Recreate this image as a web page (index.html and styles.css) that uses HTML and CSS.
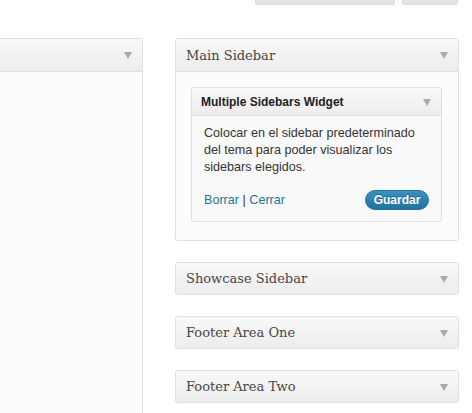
FILE: index.html
```html
<!DOCTYPE html>
<html>
<head>
<meta charset="utf-8">
<link rel="stylesheet" href="styles.css">
</head>
<body>
<div class="topbar">
  <div class="tbtn wide"></div>
  <div class="tbtn narrow"></div>
</div>
<div class="cols">
  <div class="leftcol">
    <div class="panel left">
      <div class="phead"><span class="tri"></span></div>
      <div class="pbody fill"></div>
    </div>
  </div>
  <div class="rightcol">
    <div class="panel">
      <div class="phead"><span class="ptitle">Main Sidebar</span><span class="tri"></span></div>
      <div class="pbody">
        <div class="widget">
          <div class="whead"><span class="wtitle">Multiple Sidebars Widget</span><span class="tri small"></span></div>
          <div class="wbody">
            <p class="wdesc">Colocar en el sidebar predeterminado del tema para poder visualizar los sidebars elegidos.</p>
            <div class="wactions">
              <div class="links"><a href="#">Borrar</a> | <a href="#">Cerrar</a></div>
              <button class="save">Guardar</button>
            </div>
          </div>
        </div>
      </div>
    </div>
    <div class="panel closed"><div class="phead"><span class="ptitle">Showcase Sidebar</span><span class="tri"></span></div></div>
    <div class="panel closed"><div class="phead"><span class="ptitle">Footer Area One</span><span class="tri"></span></div></div>
    <div class="panel closed"><div class="phead"><span class="ptitle">Footer Area Two</span><span class="tri"></span></div></div>
  </div>
</div>
</body>
</html>
```
FILE: styles.css
```css
html, body { margin: 0; padding: 0; background: #fff; overflow: hidden; }
body { width: 472px; height: 413px; font-family: "Liberation Sans", Arial, sans-serif; }
.topbar { display: flex; height: 38px; padding-left: 255px; gap: 7px; align-items: flex-start; }
.tbtn { height: 4px; background: #e4e4e4; border: 1px solid #dcdcdc; border-top: none; border-radius: 0 0 3px 3px; }
.tbtn.wide { width: 138px; }
.tbtn.narrow { width: 54px; }
.cols { display: flex; gap: 32px; align-items: flex-start; height: 375px; overflow: hidden; }
.leftcol { width: 143px; }
.rightcol { width: 284px; display: flex; flex-direction: column; gap: 21px; }
.panel { border: 1px solid #dfdfdf; border-radius: 3px; background: #fcfcfc; box-sizing: border-box; }
.panel.left { border-left: none; border-radius: 0 3px 0 0; border-bottom: none; }
.phead { height: 32px; display: flex; align-items: center; justify-content: space-between; padding: 0 10px; background: linear-gradient(#f9f9f9, #ececec); border-bottom: 1px solid #dfdfdf; }
.panel.closed .phead { height: 31px; border-bottom: none; border-radius: 3px; }
.panel.left .phead { justify-content: flex-end; padding-right: 10px; }
.ptitle { font-family: "DejaVu Serif", Georgia, serif; font-size: 13px; color: #464646; }
.tri { width: 0; height: 0; border-left: 4px solid transparent; border-right: 4px solid transparent; border-top: 7px solid #aaa; margin-top: 1px; }
.pbody { padding: 15px 16px 18px 15px; }
.pbody.fill { height: 400px; padding: 0; }
.widget { border: 1px solid #dfdfdf; border-radius: 3px; background: #f9f9f9; box-shadow: inset 0 1px 0 #fff; }
.whead { height: 27px; display: flex; align-items: center; justify-content: space-between; padding: 0 10px 0 9px; background: linear-gradient(#f9f9f9, #ececec); border-bottom: 1px solid #dfdfdf; }
.wtitle { font-weight: bold; font-size: 12px; color: #222; }
.wbody { padding: 9px 12px 11px 12px; }
.wdesc { margin: 0; font-size: 12.6px; line-height: 17px; color: #333; }
.wactions { display: flex; justify-content: space-between; align-items: center; margin-top: 14px; }
.links { font-size: 12.6px; color: #333; }
.links a { color: #21759b; text-decoration: none; }
.save { font-family: "Liberation Sans", Arial, sans-serif; font-weight: bold; font-size: 12px; color: #fff; height: 20px; width: 64px; padding: 0; border: 1px solid #21759b; border-radius: 11px; background: linear-gradient(#3b8fc0, #22739f); text-shadow: 0 -1px 0 rgba(0,0,0,0.3); }
```
